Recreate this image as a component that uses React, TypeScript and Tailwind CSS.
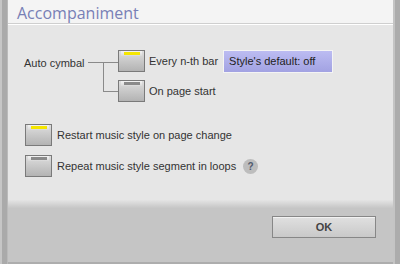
import React from "react";

function Check({ on }: { on: boolean }) {
  return (
    <div className="relative w-[27px] h-[22px] shrink-0 border border-[#7a7a7a] bg-gradient-to-b from-[#dedede] to-[#b3b3b3]">
      <div className="absolute left-[2px] right-[2px] top-0 h-[5px] bg-gradient-to-b from-[#f4f4f4] to-[#d8d8d8] flex justify-center pt-[1px]">
        <div className={`w-[16px] h-[3px] ${on ? "bg-[#f5e600]" : "bg-[#8a8a8a]"}`} />
      </div>
    </div>
  );
}

export default function App() {
  const font = { fontFamily: '"Liberation Sans", Arial, sans-serif' };
  return (
    <div className="w-[400px] h-[264px] flex overflow-hidden text-[11px] text-[#333]" style={font}>
      <div className="w-[8px] h-full flex shrink-0">
        <div className="w-[2px] bg-[#c6c6c6]" />
        <div className="w-[5px] bg-[#aaaaaa]" />
        <div className="w-[1px] bg-[#bababa]" />
      </div>
      <div className="flex-1 flex flex-col h-full">
        <div className="h-[23px] bg-[#f4f4f4] flex items-center pl-[9px] shrink-0">
          <span className="text-[16px] text-[#7880b6] leading-none mt-[2px]" style={{ fontFamily: '"Open Sans", sans-serif' }}>
            Accompaniment
          </span>
        </div>
        <div className="h-[1px] bg-[#cfcfcf] shrink-0" />
        <div className="h-[1px] bg-white shrink-0" />
        <div className="h-[175px] bg-[#e6e6e6] shrink-0 flex flex-col pt-[25px] pl-[16px]">
          <div className="flex items-start">
            <div className="mt-[5px] w-[64px]">Auto cymbal</div>
            <svg width="30" height="52" className="shrink-0">
              <line x1="0" y1="12.5" x2="30" y2="12.5" stroke="#8a8a8a" strokeWidth="1" />
              <line x1="15.5" y1="12" x2="15.5" y2="41" stroke="#8a8a8a" strokeWidth="1" />
              <line x1="15" y1="41.5" x2="30" y2="41.5" stroke="#8a8a8a" strokeWidth="1" />
            </svg>
            <div className="flex flex-col gap-[8px]">
              <div className="flex items-center h-[22px]">
                <Check on={true} />
                <span className="ml-[4px]">Every n-th bar</span>
                <div className="ml-[5px] w-[110px] h-[23px] border border-[#f4f4f4] bg-gradient-to-b from-[#bcbcf2] to-[#a2a2e2] flex items-center pl-[5px] text-[#222]">
                  Style's default: off
                </div>
              </div>
              <div className="flex items-center h-[22px]">
                <Check on={false} />
                <span className="ml-[4px]">On page start</span>
              </div>
            </div>
          </div>
          <div className="flex flex-col gap-[9px] mt-[22px] pl-[1px]">
            <div className="flex items-center h-[22px]">
              <Check on={true} />
              <span className="ml-[5px]">Restart music style on page change</span>
            </div>
            <div className="flex items-center h-[22px]">
              <Check on={false} />
              <span className="ml-[5px]">Repeat music style segment in loops</span>
              <div className="ml-[7px] w-[15px] h-[15px] rounded-full bg-[#bdbdbd] flex items-center justify-center text-[10px] font-bold text-[#505a6e]">
                ?
              </div>
            </div>
          </div>
        </div>
        <div className="h-[8px] bg-gradient-to-b from-[#e4e4e4] to-[#c6c6c6] shrink-0" />
        <div className="flex-1 bg-[#c5c5c5] flex justify-end items-start pt-[8px] pr-[17px]">
          <button className="w-[104px] h-[22px] border border-[#878787] bg-gradient-to-b from-[#e0e0e0] to-[#c9c9c9] shadow-[inset_0_1px_0_#f2f2f2] text-[11px] font-bold text-[#444] flex items-center justify-center">
            OK
          </button>
        </div>
        <div className="h-[2px] bg-[#adadad] shrink-0" />
      </div>
      <div className="w-[7px] h-full flex shrink-0">
        <div className="w-[2px] bg-[#c4c4c4]" />
        <div className="w-[5px] bg-[#acacac]" />
      </div>
    </div>
  );
}
